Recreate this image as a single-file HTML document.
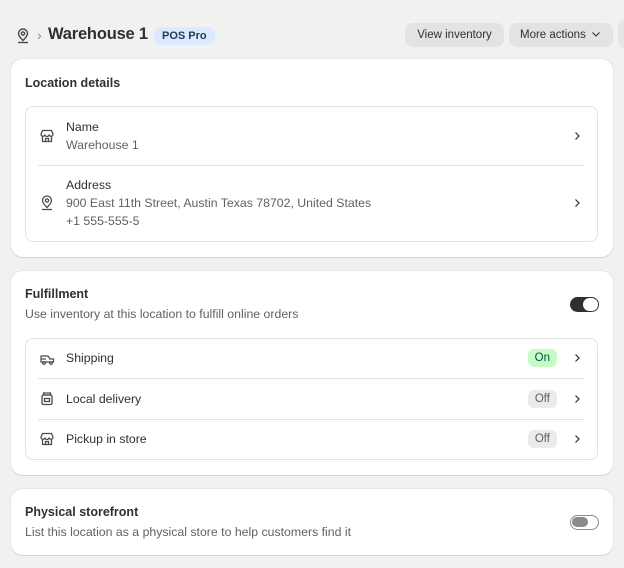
<!DOCTYPE html>
<html><head><style>
*{box-sizing:border-box;margin:0;padding:0}
body{width:624px;height:568px;background:#f1f1f1;font-family:"Liberation Sans",sans-serif;color:#303030;font-size:12px;position:relative;overflow:hidden}
.abs{position:absolute}
.card{position:absolute;left:11px;width:602px;background:#fff;border-radius:12px;box-shadow:0 1px 0 #d4d4d4,0 0 0 1px #e6e6e6}
.h{position:absolute;left:14px;font-weight:bold;font-size:12.5px;color:#303030}
.box{position:absolute;left:14px;width:573px;border:1px solid #e3e3e3;border-radius:8px}
.div{position:absolute;left:12px;right:12px;height:1px;background:#e3e3e3}
.t{position:absolute;font-size:12.3px;color:#303030;white-space:nowrap}
.g{color:#616161}
.chev{position:absolute;right:16px}
.badge{position:absolute;right:40px;height:18px;border-radius:6px;font-size:11.5px;padding:2px 7px;line-height:14px}
.ic{position:absolute;left:14px}
</style></head><body>
<svg class="abs" style="left:16px;top:28px" width="14" height="16" viewBox="0 0 14 16" fill="none" stroke="#4a4a4a" stroke-width="1.4"><path d="M7 12.5C4 9.5 2.5 7.5 2.5 5.5a4.5 4.5 0 0 1 9 0c0 2-1.5 4-4.5 7z"/><circle cx="7" cy="5.5" r="1.6"/><path d="M2 14.5h10"/></svg>
<div class="abs" style="left:37px;top:27px;font-size:14px;color:#8a8a8a">›</div>
<div class="abs" style="left:48px;top:25px;font-size:16.5px;font-weight:bold;color:#303030;letter-spacing:-0.2px">Warehouse 1</div>
<div class="abs" style="left:154px;top:27px;height:18px;padding:0 8px;background:#dbeafe;border-radius:7px;font-size:11px;line-height:18px;color:#223a59;font-weight:bold">POS Pro</div>
<div class="abs" style="left:405px;top:23px;width:99px;height:24px;background:#e3e3e3;border-radius:8px;font-size:11.5px;line-height:25px;text-align:center;color:#303030">View inventory</div>
<div class="abs" style="left:509px;top:23px;width:104px;height:24px;background:#e3e3e3;border-radius:8px;font-size:11.5px;line-height:25px;padding-left:11px;color:#303030">More actions <svg width="10" height="8" viewBox="0 0 10 8" style="margin-left:2px"><path d="M1.5 2.5l3.5 3.5 3.5-3.5" fill="none" stroke="#303030" stroke-width="1.1"/></svg></div>
<div class="abs" style="left:618px;top:20px;width:10px;height:28px;background:#e6e6e6;border-radius:6px"></div>

<div class="card" style="top:59px;height:198px">
<div class="h" style="top:17px">Location details</div>
<div class="box" style="top:47px;height:136px">
 <svg class="ic" style="top:22px" width="14" height="14" viewBox="0 0 14 14" fill="none" stroke="#4a4a4a" stroke-width="1.3"><path d="M2.5 1.5h9l1.5 3.5a2 2 0 0 1-4 .5 2 2 0 0 1-4 0 2 2 0 0 1-4-.5z"/><path d="M2.5 6.5v6h9v-6"/><path d="M5.5 12.5v-3h3v3"/></svg>
 <div class="t" style="left:40px;top:13px">Name</div>
 <div class="t g" style="left:40px;top:31px">Warehouse 1</div>
 <svg class="chev" style="top:23px" width="8" height="12" viewBox="0 0 8 12"><path d="M2.5 2.5l3.5 3.5-3.5 3.5" fill="none" stroke="#303030" stroke-width="1.2"/></svg>
 <div class="div" style="top:58px"></div>
 <svg class="ic" style="top:88px" width="14" height="16" viewBox="0 0 14 16" fill="none" stroke="#4a4a4a" stroke-width="1.3"><path d="M7 12.5C4 9.5 2.5 7.5 2.5 5.5a4.5 4.5 0 0 1 9 0c0 2-1.5 4-4.5 7z"/><circle cx="7" cy="5.5" r="1.6"/><path d="M2 14.5h10"/></svg>
 <div class="t" style="left:40px;top:71px">Address</div>
 <div class="t g" style="left:40px;top:89px">900 East 11th Street, Austin Texas 78702, United States</div>
 <div class="t g" style="left:40px;top:107px">+1 555-555-5</div>
 <svg class="chev" style="top:90px" width="8" height="12" viewBox="0 0 8 12"><path d="M2.5 2.5l3.5 3.5-3.5 3.5" fill="none" stroke="#303030" stroke-width="1.2"/></svg>
</div>
</div>

<div class="card" style="top:271px;height:204px">
<div class="h" style="top:16px">Fulfillment</div>
<div class="t g" style="left:14px;top:36px">Use inventory at this location to fulfill online orders</div>
<div class="abs" style="left:559px;top:26px;width:29px;height:15px;background:#303030;border-radius:8px"><div class="abs" style="right:1px;top:1px;width:15px;height:13px;background:#fff;border-radius:7px"></div></div>
<div class="box" style="top:67px;height:122px">
 <svg class="ic" style="top:13px" width="15" height="14" viewBox="0 0 15 14" fill="none" stroke="#4a4a4a" stroke-width="1.2"><path d="M1 4h7l2 3h3.5v3H1z"/><circle cx="4" cy="11" r="1.3"/><circle cx="11" cy="11" r="1.3"/><path d="M1 7h5"/></svg>
 <div class="t" style="left:40px;top:12px">Shipping</div>
 <div class="badge" style="top:10px;background:#c4fcc8;color:#0c5132">On</div>
 <svg class="chev" style="top:13px" width="8" height="12" viewBox="0 0 8 12"><path d="M2.5 2.5l3.5 3.5-3.5 3.5" fill="none" stroke="#303030" stroke-width="1.2"/></svg>
 <div class="div" style="top:39px"></div>
 <svg class="ic" style="top:53px" width="14" height="14" viewBox="0 0 14 14" fill="none" stroke="#4a4a4a" stroke-width="1.3"><rect x="2" y="3" width="10" height="9.5" rx="1.5"/><path d="M3.5 1h7v2h-7z"/><rect x="4.5" y="6.5" width="5" height="3"/></svg>
 <div class="t" style="left:40px;top:53px">Local delivery</div>
 <div class="badge" style="top:51px;background:#ebebeb;color:#616161">Off</div>
 <svg class="chev" style="top:54px" width="8" height="12" viewBox="0 0 8 12"><path d="M2.5 2.5l3.5 3.5-3.5 3.5" fill="none" stroke="#303030" stroke-width="1.2"/></svg>
 <div class="div" style="top:80px"></div>
 <svg class="ic" style="top:93px" width="14" height="14" viewBox="0 0 14 14" fill="none" stroke="#4a4a4a" stroke-width="1.3"><path d="M2.5 1.5h9l1.5 3.5a2 2 0 0 1-4 .5 2 2 0 0 1-4 0 2 2 0 0 1-4-.5z"/><path d="M2.5 6.5v6h9v-6"/><path d="M5.5 12.5v-3h3v3"/></svg>
 <div class="t" style="left:40px;top:93px">Pickup in store</div>
 <div class="badge" style="top:91px;background:#ebebeb;color:#616161">Off</div>
 <svg class="chev" style="top:94px" width="8" height="12" viewBox="0 0 8 12"><path d="M2.5 2.5l3.5 3.5-3.5 3.5" fill="none" stroke="#303030" stroke-width="1.2"/></svg>
</div>
</div>

<div class="card" style="top:489px;height:66px">
<div class="h" style="top:16px">Physical storefront</div>
<div class="t g" style="left:14px;top:36px">List this location as a physical store to help customers find it</div>
<div class="abs" style="left:559px;top:26px;width:29px;height:15px;background:#fff;border:1.5px solid #8a8a8a;border-radius:8px"><div class="abs" style="left:1px;top:1px;width:16px;height:10px;background:#8a8a8a;border-radius:6px"></div></div>
</div>
</body></html>
